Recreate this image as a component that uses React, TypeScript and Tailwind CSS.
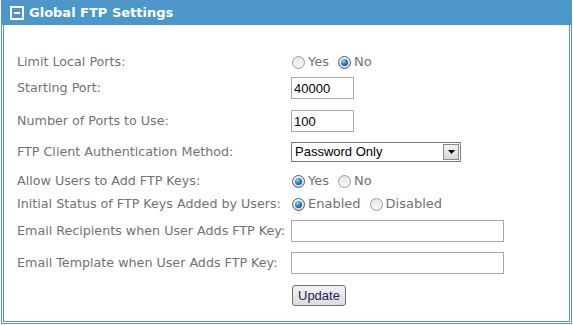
import { useState } from 'react';

const labelFont = { fontFamily: '"DejaVu Sans", Verdana, sans-serif' };

function Radio({ checked, label, onClick }: { checked: boolean; label: string; onClick: () => void }) {
  return (
    <label onClick={onClick} className="flex items-center gap-[3px] cursor-pointer mr-[9px]">
      <span
        className={
          'w-[13px] h-[13px] rounded-full border flex items-center justify-center ' +
          (checked
            ? 'border-[#4a5a6a] bg-gradient-to-b from-[#f4f4f4] to-[#d8d8d8]'
            : 'border-[#9a9a9a] bg-gradient-to-b from-[#e6e6e6] to-[#f8f8f8]')
        }
      >
        {checked && (
          <span className="w-[7px] h-[7px] rounded-full bg-[radial-gradient(circle_at_35%_30%,#8fd3ff,#1f6fb2_55%,#0d3f73)]" />
        )}
      </span>
      <span className="text-[13px] text-[#727272]">{label}</span>
    </label>
  );
}

export default function App() {
  const [limitPorts, setLimitPorts] = useState('no');
  const [allowKeys, setAllowKeys] = useState('yes');
  const [keyStatus, setKeyStatus] = useState('enabled');
  const [startPort, setStartPort] = useState('40000');
  const [numPorts, setNumPorts] = useState('100');
  const [recipients, setRecipients] = useState('');
  const [template, setTemplate] = useState('');

  const inputCls =
    'h-[22px] border border-[#a9a9a9] px-[2px] text-[13px] text-black outline-none bg-white';
  const inputFont = { fontFamily: '"Liberation Sans", Arial, sans-serif' };

  return (
    <div className="w-[573px] h-[325px] bg-white pl-[1px]" style={labelFont}>
      <div className="w-[571px] h-[324px] border border-[#5a94c4] p-[1px]">
        <div className="h-full flex flex-col border border-[#5a94c4] border-t-0">
          {/* header */}
          <div className="h-[24px] -mx-[2px] -mt-[1px] bg-[#4b97cc] flex items-center pl-[8px]">
            <span className="w-[14px] h-[14px] border-2 border-white flex items-center justify-center">
              <span className="w-[6px] h-[2px] bg-white" />
            </span>
            <span className="ml-[5px] text-white font-bold text-[13px]">Global FTP Settings</span>
          </div>

          {/* form rows */}
          <div className="flex flex-col pl-[13px] text-[12.7px] text-[#727272]">
            <div className="flex items-center h-[24px] mt-[25px]">
              <div className="w-[275px]">Limit Local Ports:</div>
              <Radio checked={limitPorts === 'yes'} label="Yes" onClick={() => setLimitPorts('yes')} />
              <Radio checked={limitPorts === 'no'} label="No" onClick={() => setLimitPorts('no')} />
            </div>

            <div className="flex items-center h-[24px] mt-[2px]">
              <div className="w-[274px]">Starting Port:</div>
              <input
                value={startPort}
                onChange={(e) => setStartPort(e.target.value)}
                className={inputCls + ' w-[63px]'}
                style={inputFont}
              />
            </div>

            <div className="flex items-center h-[24px] mt-[9px]">
              <div className="w-[274px]">Number of Ports to Use:</div>
              <input
                value={numPorts}
                onChange={(e) => setNumPorts(e.target.value)}
                className={inputCls + ' w-[63px]'}
                style={inputFont}
              />
            </div>

            <div className="flex items-center h-[22px] mt-[8px]">
              <div className="w-[274px]">FTP Client Authentication Method:</div>
              <div
                className="w-[170px] h-[20px] border border-[#7a7a7a] flex items-center justify-between text-[13px] text-black"
                style={inputFont}
              >
                <span className="pl-[3px]">Password Only</span>
                <span className="w-[16px] h-[16px] mr-[1px] border border-[#8a8a8a] bg-gradient-to-b from-[#f4f4f4] to-[#d6d6d6] flex items-center justify-center">
                  <svg width="7" height="4" viewBox="0 0 7 4">
                    <path d="M0 0h7L3.5 4z" fill="#000" />
                  </svg>
                </span>
              </div>
            </div>

            <div className="flex items-center h-[22px] mt-[7px]">
              <div className="w-[275px]">Allow Users to Add FTP Keys:</div>
              <Radio checked={allowKeys === 'yes'} label="Yes" onClick={() => setAllowKeys('yes')} />
              <Radio checked={allowKeys === 'no'} label="No" onClick={() => setAllowKeys('no')} />
            </div>

            <div className="flex items-center h-[22px] mt-[1px]">
              <div className="w-[275px]">Initial Status of FTP Keys Added by Users:</div>
              <Radio checked={keyStatus === 'enabled'} label="Enabled" onClick={() => setKeyStatus('enabled')} />
              <Radio checked={keyStatus === 'disabled'} label="Disabled" onClick={() => setKeyStatus('disabled')} />
            </div>

            <div className="flex items-center h-[24px] mt-[4px]">
              <div className="w-[274px]">Email Recipients when User Adds FTP Key:</div>
              <input
                value={recipients}
                onChange={(e) => setRecipients(e.target.value)}
                className={inputCls + ' w-[213px]'}
                style={inputFont}
              />
            </div>

            <div className="flex items-center h-[24px] mt-[8px]">
              <div className="w-[274px]">Email Template when User Adds FTP Key:</div>
              <input
                value={template}
                onChange={(e) => setTemplate(e.target.value)}
                className={inputCls + ' w-[213px]'}
                style={inputFont}
              />
            </div>

            <div className="flex items-center h-[22px] mt-[9px]">
              <div className="w-[275px]" />
              <button
                type="button"
                className="h-[21px] px-[5px] border border-[#707070] rounded-[3px] bg-gradient-to-b from-[#f2f2f2] to-[#dcdcdc] text-[13px] text-[#2a1a5a]"
                style={inputFont}
              >
                Update
              </button>
            </div>
          </div>
        </div>
      </div>
    </div>
  );
}
